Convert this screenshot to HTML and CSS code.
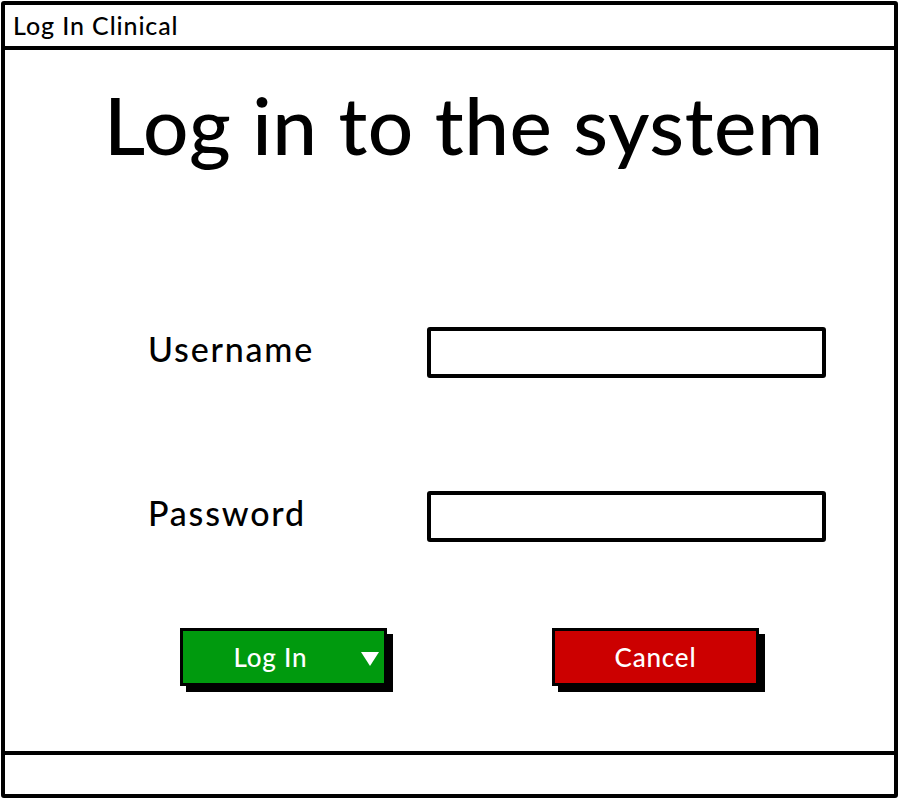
FILE: index.html
```html
<!DOCTYPE html>
<html>
<head>
<meta charset="utf-8">
<link rel="stylesheet" href="styles.css">
</head>
<body>
<div class="window">
  <div class="titlebar">Log In Clinical</div>
  <div class="main">
    <h1 class="heading">Log in to the system</h1>
    <div class="form">
      <label class="label">Username</label>
      <div class="input"></div>
      <label class="label">Password</label>
      <div class="input"></div>
    </div>
    <div class="buttons">
      <div class="btn btn-green"><span class="btn-text">Log In</span><span class="caret"></span></div>
      <div class="btn btn-red"><span class="btn-text">Cancel</span></div>
    </div>
  </div>
  <div class="statusbar"></div>
</div>
</body>
</html>
```
FILE: styles.css
```css
* { box-sizing: border-box; }
html, body { margin: 0; padding: 0; background: #fff; }
body { font-family: Lato, "Noto Sans", sans-serif; font-weight: 500; color: #000; }
.window {
  margin: 1px;
  width: 897px;
  height: 797px;
  border: 4px solid #000;
  border-radius: 3px;
  display: flex;
  flex-direction: column;
}
.titlebar {
  height: 45px;
  border-bottom: 4px solid #000;
  font-size: 25px;
  line-height: 40px;
  letter-spacing: 0.9px;
  padding-left: 8px;
}
.main {
  flex: 1;
  display: flex;
  flex-direction: column;
}
.heading {
  margin: 34px 0 0 99px;
  font-size: 80px;
  font-weight: 500;
  line-height: 80px;
  letter-spacing: 0.6px;
}
.form {
  margin: 163px 0 0 143px;
  display: grid;
  grid-template-columns: 279px 399px;
  grid-auto-rows: 51px;
  row-gap: 113px;
  align-items: center;
}
.label {
  font-size: 34px;
  letter-spacing: 1.8px;
  padding-bottom: 8px;
}
.input {
  height: 51px;
  border: 4px solid #000;
  border-radius: 3px;
  background: #fff;
}
.buttons {
  margin: 86px 0 0 175px;
  display: flex;
  gap: 165px;
}
.btn {
  position: relative;
  width: 207px;
  height: 58px;
  border: 3px solid #000;
  box-shadow: 6px 6px 0 #000;
  display: flex;
  align-items: center;
  justify-content: center;
  color: #fff;
  font-size: 26px;
  letter-spacing: 0.8px;
}
.btn-green { background: #009a0e; padding-right: 26px; }
.btn-red { background: #cc0000; }
.caret {
  position: absolute;
  right: 5px;
  top: 21px;
  width: 0;
  height: 0;
  border-left: 9px solid transparent;
  border-right: 9px solid transparent;
  border-top: 14px solid #fff;
}
.statusbar {
  height: 43px;
  border-top: 4px solid #000;
}
```
